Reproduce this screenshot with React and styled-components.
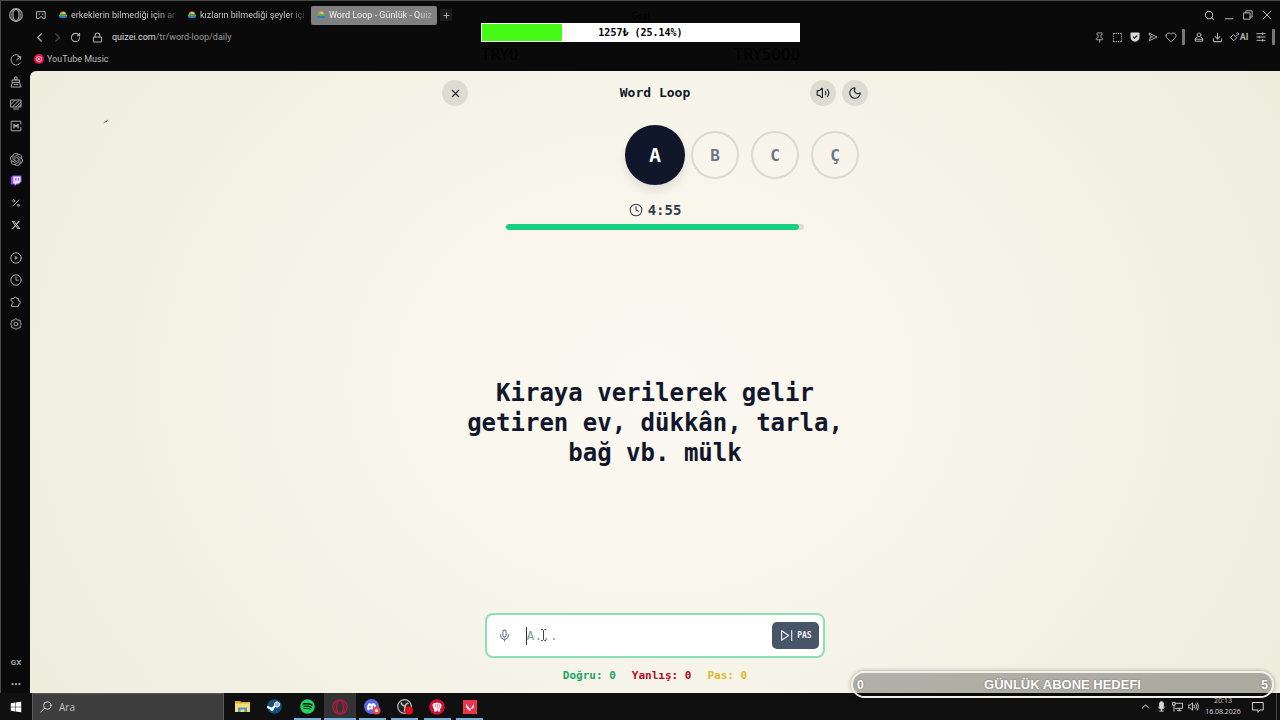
import React from "react";
import styled, { createGlobalStyle, css } from "styled-components";
import {
  X, Volume2, Moon, Clock, Mic, Search, ChevronLeft, ChevronRight, RotateCw, Lock, Pin,
  SquareDashed, Heart, Download, Percent, Plus, ChevronUp, Ellipsis,
} from "lucide-react";
import { FaXTwitter, FaSpotify, FaWindows } from "react-icons/fa6";
import { SiOpenai } from "react-icons/si";

const mono = '"DejaVu Sans Mono", "Liberation Mono", monospace';
const ui = 'Roboto, "Open Sans", sans-serif';

const GlobalStyle = createGlobalStyle`
  *, *::before, *::after { box-sizing: border-box; }
  body { margin: 0; background: #0a0a0a; }
  button, input { font: inherit; margin: 0; padding: 0; border: 0; background: none; color: inherit; }
  a { color: inherit; text-decoration: none; }
  svg { display: block; flex: none; }
`;

const Desktop = styled.div`
  position: relative;
  display: flex;
  flex-direction: column;
  min-height: 100vh;
  overflow: hidden;
  background: #0a0a0a;
  font-family: ${ui};
`;
const Browser = styled.div`
  flex: 1;
  display: flex;
  box-shadow: inset 1px 1px 0 #4a4a4a;
`;

/* Browser side panel */
const SideBar = styled.nav`
  width: 30px;
  padding: 0 0 0 2px;
  display: flex;
  flex-direction: column;
  color: #a9a9a9;
`;
const SideGroup = styled.div`
  display: flex;
  flex-direction: column;
  margin-bottom: 11px;
`;
const SideButton = styled.button`
  height: ${(p) => p.$h || 22}px;
  display: flex;
  align-items: center;
  justify-content: center;
  color: ${(p) => p.$color || "inherit"};
  font-size: 8px;
  font-weight: 700;
`;
const Spacer = styled.div`
  flex: ${(p) => (p.$h ? "none" : 1)};
  height: ${(p) => (p.$h ? p.$h + "px" : "auto")};
`;
const SideFooter = styled.div`
  display: flex;
  flex-direction: column;
  gap: 4px;
`;

const Main = styled.div`
  flex: 1;
  min-width: 0;
  display: flex;
  flex-direction: column;
`;
const TabRow = styled.div`
  height: 28px;
  padding: 2px 4px 0 6px;
  display: flex;
  align-items: center;
  color: #b5b5b5;
`;
const Tabs = styled.div`
  display: flex;
  gap: 3px;
  margin-left: 7px;
`;
const Tab = styled.button`
  width: 126px;
  height: 19px;
  padding: 0 0 0 5px;
  display: flex;
  align-items: center;
  gap: 3px;
  border-radius: 2px;
  font-size: 9px;
  color: #c6c6c6;
  ${(p) => p.$active && css`background: #808080; color: #f0f0f0;`}
`;
const TabTitle = styled.span`
  flex: 1;
  white-space: nowrap;
  text-align: left;
  mask-image: linear-gradient(to right, #000 80%, rgba(0, 0, 0, 0.1));
`;
const NewTab = styled.button`
  width: 12px;
  height: 12px;
  margin-left: 3px;
  display: grid;
  place-items: center;
  background: #1c1c1c;
`;
const WindowButton = styled.button`
  width: 19px;
  height: 20px;
  display: grid;
  place-items: center;
`;
const AddressRow = styled.div`
  height: 18px;
  display: flex;
  align-items: center;
  color: #b0b0b0;
`;
const NavButton = styled.button`
  width: 18px;
  display: grid;
  place-items: center;
  color: ${(p) => (p.$dim ? "#484848" : "inherit")};
`;
const Address = styled.a`
  margin-left: 6px;
  font-size: 9px;
  color: #9a9a9a;
  b { font-weight: 400; color: #dcdcdc; }
`;
const ToolButton = styled.button`
  width: ${(p) => p.$w || 18}px;
  display: flex;
  align-items: center;
  justify-content: center;
  font-size: 9px;
  font-weight: 700;
`;
const LockButton = styled(ToolButton)`
  width: 20px;
  margin: 0 -1px 0 3px;
`;
const Divider = styled.i`
  width: 3px;
  height: 16px;
  margin: 0 5px 0 2px;
  border-radius: 1px;
  background: #777;
`;
const BookmarkRow = styled.div`
  height: 25px;
  padding-left: 4px;
  display: flex;
  align-items: center;
`;
const Bookmark = styled.a`
  display: flex;
  align-items: center;
  gap: 3px;
  font-size: 9px;
  color: #bdbdbd;
`;

/* Game page */
const Page = styled.main`
  flex: 1;
  position: relative;
  display: flex;
  flex-direction: column;
  align-items: center;
  padding: 8px 16px 10px;
  border-top-left-radius: 6px;
  background: radial-gradient(ellipse 58% 95% at 50% 50%, #faf8f1 0%, #f8f6ea 40%, #f2f0e3 75%, #eeedde 100%);
  color: #0f172a;
  font-family: ${mono};
  font-weight: 700;
`;
const Game = styled.div`
  flex: 1;
  width: 100%;
  max-width: 426px;
  display: flex;
  flex-direction: column;
  align-items: center;
`;
const GameHeader = styled.header`
  width: 100%;
  display: grid;
  grid-template-columns: 1fr auto 1fr;
  align-items: center;
`;
const Title = styled.h1`
  margin: 0;
  font-size: 13px;
  line-height: 28px;
`;
const HeaderActions = styled.div`
  display: flex;
  gap: 6px;
  justify-self: end;
`;
const RoundButton = styled.button`
  width: 26px;
  height: 26px;
  display: grid;
  place-items: center;
  border-radius: 50%;
  background: #dedcd1;
  color: #1e2430;
`;
const Letters = styled.div`
  width: 100%;
  height: 60px;
  margin-top: 18px;
  padding-left: calc(50% - 24px);
  display: flex;
  align-items: center;
  gap: 12px;
`;
const Letter = styled.span`
  flex: none;
  width: 48px;
  height: 48px;
  display: grid;
  place-items: center;
  border: 2px solid #dadad0;
  border-radius: 50%;
  font-size: 16px;
  color: #6b7488;
  ${(p) => p.$current && css`
    width: 60px;
    height: 60px;
    margin: 0 -6px;
    border-color: #10172b;
    background: #10172b;
    color: #fff;
    font-size: 20px;
    box-shadow: 0 5px 10px rgba(15, 23, 42, 0.1);
  `}
`;
const Timer = styled.div`
  margin-top: 17px;
  display: flex;
  align-items: center;
  gap: 5px;
  font-size: 14px;
  line-height: 16px;
  color: #333b4c;
`;
const Track = styled.div`
  width: 70%;
  height: 6px;
  margin-top: 6px;
  border-radius: 3px;
  background: #deddd2;
  overflow: hidden;
`;
const Fill = styled.div`
  height: 100%;
  border-radius: 3px;
  background: #16cf80;
`;
const Question = styled.p`
  flex: 1;
  margin: 0;
  padding-top: 3px;
  max-width: 384px;
  display: flex;
  align-items: center;
  text-align: center;
  font-size: 24px;
  line-height: 30px;
  color: #11162a;
`;
const Answer = styled.form`
  width: 80%;
  height: 45px;
  padding: 0 4px 0 11px;
  display: flex;
  align-items: center;
  border: 2px solid #8ce0b6;
  border-radius: 8px;
  background: #fff;
`;
const MicButton = styled.button`
  width: 12px;
  display: grid;
  place-items: center;
  color: #6d7588;
`;
const Field = styled.div`
  position: relative;
  flex: 1;
  min-width: 0;
  margin-left: 16px;
  border-left: 1px solid #333;
`;
const AnswerInput = styled.input`
  display: block;
  width: 100%;
  height: 18px;
  font-size: 13px;
  font-weight: 400;
  outline: none;
  &::placeholder { color: #83a09a; opacity: 1; }
`;
const Pointer = styled.svg`
  position: absolute;
  left: 13px;
  top: 2px;
`;
const PassButton = styled.button`
  width: 47px;
  height: 27px;
  display: flex;
  align-items: center;
  justify-content: center;
  gap: 4px;
  border-radius: 5px;
  background: #475569;
  color: #f4f6f8;
  font-size: 8px;
`;
const Stats = styled.div`
  margin-top: 10px;
  display: flex;
  gap: 16px;
  font-size: 11px;
  line-height: 15px;
`;
const Stat = styled.span`
  color: ${(p) => p.$color};
`;
const Stray = styled.svg`
  position: absolute;
  left: 73px;
  top: 48px;
`;

/* Stream overlays */
const Donation = styled.section`
  position: absolute;
  top: 10px;
  left: calc(50% - 159px);
  width: 319px;
  color: #000;
  font-family: "DejaVu Sans", sans-serif;
`;
const DonationTitle = styled.div`
  font-size: 8px;
  line-height: 13px;
  text-align: center;
`;
const DonationBar = styled.div`
  height: 19px;
  display: grid;
  align-items: center;
  border: 1px solid #fff;
  background: #fff;
`;
const DonationFill = styled.div`
  grid-area: 1 / 1;
  height: 17px;
  background: #48fb17;
`;
const DonationText = styled.span`
  grid-area: 1 / 1;
  text-align: center;
  font: 700 10px/17px ${mono};
`;
const DonationRange = styled.div`
  display: flex;
  justify-content: space-between;
  padding-top: 4px;
  font-size: 15px;
  line-height: 18px;
`;
const Goal = styled.section`
  position: absolute;
  right: 6px;
  bottom: 22px;
  width: 423px;
  height: 27px;
  padding: 0 4px;
  display: flex;
  align-items: center;
  justify-content: space-between;
  border: 2px solid #f1f1eb;
  border-radius: 14px;
  background: rgba(0, 0, 0, 0.28);
  box-shadow: 0 0 4px rgba(0, 0, 0, 0.35);
  color: #fff;
  font: 700 13px/20px "Liberation Sans", Arial, sans-serif;
  text-shadow: 0 0 2px rgba(0, 0, 0, 0.4);
`;
const GoalEnd = styled.span`
  font-size: 12px;
`;

/* Taskbar */
const TaskBar = styled.footer`
  height: 27px;
  display: flex;
  align-items: stretch;
  background: #101010;
  color: #d8d8d8;
`;
const StartButton = styled.button`
  width: 32px;
  display: grid;
  place-items: center;
  color: #fff;
`;
const SearchBox = styled.label`
  width: 192px;
  padding-left: 7px;
  display: flex;
  align-items: center;
  gap: 7px;
  border: 1px solid #5a5a5a;
  border-bottom: 0;
  background: #3e3e3e;
  input { width: 100px; font: 10px "Open Sans", sans-serif; outline: none; }
  input::placeholder { color: #c0c0c0; opacity: 1; }
`;
const Apps = styled.div`
  width: 260px;
  margin-left: 2px;
  display: flex;
  justify-content: space-between;
`;
const TaskButton = styled.button`
  width: 32px;
  display: grid;
  place-items: center;
  background: ${(p) => (p.$active ? "#333" : "transparent")};
  color: ${(p) => p.$color || "inherit"};
  ${(p) => p.$open && css`
    background-image: linear-gradient(#79aed6, #79aed6);
    background-size: ${p.$active ? "32px" : "27px"} 2px;
    background-position: bottom center;
    background-repeat: no-repeat;
  `}
`;
const Tray = styled.div`
  margin-left: auto;
  display: flex;
  align-items: center;
`;
const TrayButton = styled.button`
  width: 16px;
  display: grid;
  place-items: center;
`;
const DateTime = styled.time`
  align-self: flex-start;
  width: 44px;
  padding-top: 2px;
  text-align: center;
  font: 7px/11px "Open Sans", sans-serif;
`;
const NoticeButton = styled(TrayButton)`
  width: 26px;
`;
const PeekEdge = styled.div`
  align-self: stretch;
  width: 4px;
  margin-left: 5px;
  border-left: 1px solid #444;
`;

const Svg = ({ s = 12, w = 1.4, children }) => (
  <svg width={s} height={s} viewBox="0 0 12 12" fill="none" stroke="currentColor" strokeWidth={w} strokeLinecap="round" strokeLinejoin="round" aria-hidden="true">
    {children}
  </svg>
);
const OperaLogo = ({ s = 14 }) => (
  <Svg s={s} w={1}>
    <circle cx="6" cy="6" r="5.4" />
    <ellipse cx="6" cy="6" rx="2.6" ry="4.8" />
    <path d="M3.8 1.4C1.5 4 1.5 8 3.8 10.6M8.2 1.4c2.3 2.6 2.3 6.6 0 9.2" strokeWidth=".6" />
  </Svg>
);
const Favicon = () => (
  <svg width="10" height="10" viewBox="0 0 10 10" aria-hidden="true">
    <path d="M2 4.5a3 3 0 0 1 6 0z" fill="#f2c230" />
    <path d="M2 4.5A3 3 0 0 1 4 1.7l.6 2.8z" fill="#d9852d" />
    <path d="M1 4.5h8v1.8H1z" fill="#3cae85" />
    <path d="M1 6h8l-.8 2H1.8z" fill="#287fb8" />
  </svg>
);

const tabs = ["erkeklerin bilmediği için ar", "kızların bilmediği şeyler içi", "Word Loop - Günlük - Quiz"];

export default function App() {
  return (
    <Desktop>
      <GlobalStyle />
      <Browser>
        <SideBar aria-label="Sidebar">
          <SideButton $h={30} aria-label="Opera"><OperaLogo /></SideButton>
          <Spacer $h={19} />
          <SideGroup>
            <SideButton aria-label="Speed dial"><Svg w={1}><path d="M8.500 1.200A5.200 5.200 0 1 0 10.500 8.800M6.500 6l4-3M7.800 2.600l3-.2-.4 3" /></Svg></SideButton>
            <SideButton aria-label="Cleaner"><Svg w={1}><path d="M5 1h2v3H5zM2.500 4h7v2.500h-7zM2.500 6.500L1 11h10L9.500 6.500M4 8.500h4" /></Svg></SideButton>
            <SideButton aria-label="Wallpaper"><Svg w={1}><path d="M1 2h10v7H1zM3.500 11h5M1.500 6L5 2.300M3 8.500L9 2.400M6 8.700L10.800 4M8.800 8.700L10.800 7" /></Svg></SideButton>
            <SideButton aria-label="Mods"><Svg w={1}><path d="M10.800 4V1.200H1.200v9.600h9.600V7.500" /><path d="M4 7.800V4.400l2 2 2-2v3.400" strokeWidth="1.400" /></Svg></SideButton>
          </SideGroup>
          <SideGroup>
            <SideButton aria-label="ChatGPT"><SiOpenai size={13} /></SideButton>
            <SideButton aria-label="Twitch">
              <svg width="12" height="12" viewBox="0 0 12 12" aria-hidden="true">
                <path d="M2.500.5h9v6.300L8.700 9.600H6.600L4.500 11.600V9.600H.8V2.300z" fill="#8d45f0" />
                <path d="M3.200 1.400h7.400v5L8.600 8.400H6.700L5 9.900V8.400H3.200z" fill="#e9dcff" />
                <path d="M5.800 3.100v2.600M8.300 3.100v2.600" stroke="#8d45f0" strokeWidth="1" />
              </svg>
            </SideButton>
            <SideButton aria-label="Deals"><Percent size={10} strokeWidth={2.400} /></SideButton>
            <SideButton $color="#d0d0d0" aria-label="X"><FaXTwitter size={10} /></SideButton>
          </SideGroup>
          <SideGroup>
            <SideButton aria-label="Player">
              <Svg w={1}><circle cx="6" cy="6" r="5.200" /><path d="M5.200 4.600v2.800L7.400 6z" fill="currentColor" strokeWidth=".6" /></Svg>
            </SideButton>
            <SideButton aria-label="History"><Svg w={1}><circle cx="6" cy="6" r="5.200" /><path d="M6 3v3.200h2.200" /></Svg></SideButton>
            <SideButton aria-label="Extensions">
              <Svg w={1}><path d="M1.500 2.600h2.300a1.500 1.500 0 0 1 3 0h1.700v2a1.700 1.700 0 0 1 0 3.800v2h-7V8.300C3.600 7.600 3.600 5.500 1.500 5z" /></Svg>
            </SideButton>
            <SideButton aria-label="Settings">
              <Svg w={1}><path d="M6 .7l1.500 1.200 2.800.6.1 2.300L11.400 6l-1 1.400-.1 2.200-2.600.6L6 11.300 4.300 10.200l-2.600-.6-.1-2.200L.6 6l1-1.300.1-2.200 2.700-.6z" /><circle cx="6" cy="6" r="1.900" /></Svg>
            </SideButton>
          </SideGroup>
          <Spacer />
          <SideFooter>
            <SideButton $h={18}>GX</SideButton>
            <SideButton $h={18} aria-label="More"><Ellipsis size={12} strokeWidth={2.500} /></SideButton>
          </SideFooter>
        </SideBar>

        <Main>
          <TabRow>
            <Svg s={10} w={1.200}><path d="M1 2h10v8H8L6.800 8H5.200L4 10H1zM3.500 5h.8M7.700 5h.8" /></Svg>
            <Tabs>
              {tabs.map((t, i) => (
                <Tab key={t} $active={i === 2}><Favicon /><TabTitle>{t}</TabTitle></Tab>
              ))}
            </Tabs>
            <NewTab aria-label="New tab"><Plus size={9} strokeWidth={2.500} /></NewTab>
            <Spacer />
            <WindowButton aria-label="Search tabs"><Search size={11} strokeWidth={2.200} /></WindowButton>
            <WindowButton aria-label="Minimize"><Svg s={10} w={1.200}><path d="M1.500 10.500h9" /></Svg></WindowButton>
            <WindowButton aria-label="Restore"><Svg s={10} w={1.200}><path d="M1 3.500h7.500V11H1zM3.500 3.500V1H11v7.500H8.500" /></Svg></WindowButton>
            <WindowButton aria-label="Close"><Svg s={10} w={1.200}><path d="M1.200 1.200l9.600 9.600M10.800 1.200l-9.600 9.600" /></Svg></WindowButton>
          </TabRow>
          <AddressRow>
            <NavButton aria-label="Back"><ChevronLeft size={15} strokeWidth={1.800} /></NavButton>
            <NavButton $dim aria-label="Forward"><ChevronRight size={15} strokeWidth={1.800} /></NavButton>
            <NavButton aria-label="Reload"><RotateCw size={11} strokeWidth={2.200} /></NavButton>
            <LockButton aria-label="Site security"><Lock size={11} strokeWidth={2.200} /></LockButton>
            <Address href="#"><b>quizei.com</b>/tr/word-loop/daily</Address>
            <Spacer />
            <ToolButton aria-label="Pin"><Pin size={11} strokeWidth={2} /></ToolButton>
            <ToolButton aria-label="Snapshot"><SquareDashed size={11} strokeWidth={2.200} /></ToolButton>
            <ToolButton aria-label="Protection">
              <svg width="10" height="10" viewBox="0 0 10 10" aria-hidden="true"><path d="M.5 1.500Q.5.500 1.500.500h7q1 0 1 1V5c0 3-2 4-4.500 4.800C2.500 9 .5 8 .5 5z" fill="#d8d8d8" /><path d="M3 4.600l1.500 1.500L7.200 3.500" fill="none" stroke="#222" strokeWidth="1.200" /></svg>
            </ToolButton>
            <ToolButton aria-label="Flow"><Svg s={10} w={1.200}><path d="M1.500 1.500L11 6l-9.500 4.500L3 6zM3 6h3" /></Svg></ToolButton>
            <ToolButton aria-label="Favourite"><Heart size={12} strokeWidth={2} /></ToolButton>
            <Divider />
            <ToolButton aria-label="Profile"><Svg s={10} w={1.200}><circle cx="6" cy="3.500" r="2.300" /><path d="M3.500 6.500Q1.500 7 1.500 8.500V11h9V8.500Q10.500 7 8.500 6.500M1.500 8.700h9" /></Svg></ToolButton>
            <ToolButton aria-label="Downloads"><Download size={11} strokeWidth={2.200} /></ToolButton>
            <ToolButton $w={26}><Svg s={10} w={1.200}><path d="M4.500 3.500L8 7l-3.500 3.500L1 7zM7.500 3.500l1.500 1.500M9.500 1l1.500 1.500-1 1L8.500 2z" /></Svg>AI</ToolButton>
            <ToolButton aria-label="Easy setup"><Svg s={10} w={1.200}><path d="M1 2h10M1 6h10M1 10h10M8 1v2M4 5v2M8 9v2" /></Svg></ToolButton>
            <Divider />
          </AddressRow>
          <BookmarkRow>
            <Bookmark href="#">
              <svg width="10" height="10" viewBox="0 0 10 10" aria-hidden="true"><circle cx="5" cy="5" r="5" fill="#f0104a" /><circle cx="5" cy="5" r="2.600" fill="none" stroke="#fff" strokeWidth=".7" /><path d="M4.200 3.700v2.600L6.400 5z" fill="#fff" /></svg>
              YouTube Music
            </Bookmark>
          </BookmarkRow>

          <Page>
            <Stray width="6" height="5" viewBox="0 0 6 5" aria-hidden="true"><path d="M0 4.500L5 .5l-1 2z" fill="#222" /></Stray>
            <Game>
              <GameHeader>
                <RoundButton aria-label="Kapat"><X size={13} strokeWidth={2} /></RoundButton>
                <Title>Word Loop</Title>
                <HeaderActions>
                  <RoundButton aria-label="Ses"><Volume2 size={14} strokeWidth={2} /></RoundButton>
                  <RoundButton aria-label="Tema"><Moon size={14} strokeWidth={2} /></RoundButton>
                </HeaderActions>
              </GameHeader>
              <Letters>
                <Letter $current>A</Letter>
                <Letter>B</Letter>
                <Letter>C</Letter>
                <Letter>Ç</Letter>
              </Letters>
              <Timer><Clock size={14} strokeWidth={1.800} />4:55</Timer>
              <Track><Fill style={{ width: `${(295 / 300) * 100}%` }} /></Track>
              <Question>Kiraya verilerek gelir getiren ev, dükkân, tarla, bağ vb. mülk</Question>
              <Answer onSubmit={(e) => e.preventDefault()}>
                <MicButton type="button" aria-label="Sesli yanıt"><Mic size={13} strokeWidth={2} /></MicButton>
                <Field>
                  <AnswerInput placeholder="A..." aria-label="Yanıt" />
                  <Pointer width="7" height="12" viewBox="0 0 7 12" fill="none" stroke="#444" aria-hidden="true"><path d="M1 .5h1.500l1 1 1-1H6M3.500 1.500v9M1 11.500h1.500l1-1 1 1H6" /></Pointer>
                </Field>
                <PassButton type="button">
                  <Svg s={13} w={1}><path d="M1.500 1.600v8.800L8 6zM10.800 1.500v9" /></Svg>PAS
                </PassButton>
              </Answer>
              <Stats>
                <Stat $color="#1da467">Doğru: 0</Stat>
                <Stat $color="#b00a28">Yanlış: 0</Stat>
                <Stat $color="#dcb92c">Pas: 0</Stat>
              </Stats>
            </Game>
          </Page>
        </Main>
      </Browser>

      <TaskBar>
        <StartButton aria-label="Başlat"><FaWindows size={12} /></StartButton>
        <SearchBox><Svg w={1}><circle cx="7.300" cy="4.500" r="3.700" /><path d="M4.600 7.200L.8 11" /></Svg><input placeholder="Ara" aria-label="Ara" /></SearchBox>
        <Apps>
          <TaskButton aria-label="Dosya Gezgini">
            <svg width="15" height="13" viewBox="0 0 15 13" aria-hidden="true"><path d="M0 1h5l1 1h9v10H0z" fill="#e0ac3c" /><path d="M0 3.500h15V12H0z" fill="#f9db7a" /><path d="M3 12V7.500h9V12h-2.500V9.500h-4V12z" fill="#4b9cc4" /></svg>
          </TaskButton>
          <TaskButton aria-label="Steam">
            <svg width="15" height="15" viewBox="0 0 15 15" aria-hidden="true"><circle cx="7.500" cy="7.500" r="7.300" fill="#135080" /><path d="M0 7.800l5 2.200 3-3" stroke="#fff" strokeWidth="2.200" fill="none" /><circle cx="10" cy="5.500" r="2.600" fill="#9fb9cf" stroke="#fff" /><circle cx="5" cy="10.200" r="1.800" fill="#fff" /></svg>
          </TaskButton>
          <TaskButton $open $color="#1ed760" aria-label="Spotify"><FaSpotify size={15} /></TaskButton>
          <TaskButton $open $active $color="#b01c44" aria-label="Opera GX"><OperaLogo s={16} /></TaskButton>
          <TaskButton $open aria-label="Discord">
            <svg width="17" height="16" viewBox="0 0 17 16" aria-hidden="true"><circle cx="7.500" cy="7.500" r="7.500" fill="#5865f2" /><path d="M3 10.500Q2.700 6.500 4.500 4.500l1.800-.6.5.8h1.600l.5-.8 1.800.6q1.800 2 1.500 6l-2 1-.7-1.200H5.700L5 11.500z" fill="#fff" /><circle cx="5.900" cy="7.800" r=".9" fill="#5865f2" /><circle cx="9.300" cy="7.800" r=".9" fill="#5865f2" /><circle cx="12.500" cy="11.500" r="4" fill="#e5484d" /><circle cx="12.500" cy="11.500" r="1.500" fill="#fff" /></svg>
          </TaskButton>
          <TaskButton $open aria-label="OBS">
            <svg width="16" height="16" viewBox="0 0 16 16" aria-hidden="true"><circle cx="7.500" cy="7.500" r="6.800" fill="#222" stroke="#bbb" strokeWidth="1.200" /><path d="M4 3.500q1 3.500 4 3.500M11.500 4q-3 .5-3.500 4M7 12.500Q9 10 7.500 7.500" stroke="#bbb" strokeWidth="1.500" fill="none" /><circle cx="12" cy="11.500" r="4" fill="#e80d12" /></svg>
          </TaskButton>
          <TaskButton $open aria-label="Kick">
            <svg width="16" height="16" viewBox="0 0 16 16" aria-hidden="true"><circle cx="8" cy="8" r="7.800" fill="#d40f35" /><path d="M3.500 5.500l1.500-1.500 1.500.3L8 3.500l1.500.6 1.500.2 1.500 1.500-.3 3-1.200 1.200.3 2.500H9l-.5-2-.8 2H5L5.200 10 4 8.500z" fill="#fff" /><path d="M6.300 5v3M8.300 5v2.700M10.300 5.300v2.500M7.500 9h3" stroke="#d40f35" strokeWidth=".6" /></svg>
          </TaskButton>
          <TaskButton $open aria-label="Valorant">
            <svg width="14" height="14" viewBox="0 0 14 14" aria-hidden="true"><path d="M0 0h14v14H0z" fill="#e8364f" /><path d="M3 4v2.800L6 10.500h2.200zM11 4v2.800L9.300 9H7.500z" fill="#fff" /></svg>
          </TaskButton>
        </Apps>
        <Tray>
          <TrayButton aria-label="Gizli simgeler"><ChevronUp size={13} strokeWidth={1.800} /></TrayButton>
          <TrayButton aria-label="Mikrofon"><Svg s={11} w={1}><path d="M6 8v3M4 11h4M3 6.500Q3 9 6 9t3-2.500" /><rect x="4" y="1" width="4" height="7" rx="1.500" fill="currentColor" /></Svg></TrayButton>
          <TrayButton aria-label="Ağ"><Svg s={11} w={1}><path d="M4 2.500h7.500V8H4M1 1.500h2.500v3H1zM2.200 4.500V11M6 10.500h4M8 8v2.500" /></Svg></TrayButton>
          <TrayButton aria-label="Ses"><Svg s={11} w={1}><path d="M.5 4.500h1.800L5 2v8L2.300 7.500H.5zM6.800 4.500q1 1.500 0 3M8.600 3.200q2 2.800 0 5.600M10.300 2q2.700 4 0 8" /></Svg></TrayButton>
          <DateTime>20:13<br />16.08.2026</DateTime>
          <NoticeButton aria-label="Bildirimler"><Svg s={12} w={1}><path d="M.8 1.500h10.400v7.500H8L6 11.300V9H.8z" /></Svg></NoticeButton>
          <PeekEdge />
        </Tray>
      </TaskBar>

      <Donation>
        <DonationTitle>Goal</DonationTitle>
        <DonationBar>
          <DonationFill style={{ width: "25.14%" }} />
          <DonationText>1257₺ (25.14%)</DonationText>
        </DonationBar>
        <DonationRange><span>TRY0</span><span>TRY5000</span></DonationRange>
      </Donation>
      <Goal><GoalEnd>0</GoalEnd><span>GÜNLÜK ABONE HEDEFI</span><GoalEnd>5</GoalEnd></Goal>
    </Desktop>
  );
}
